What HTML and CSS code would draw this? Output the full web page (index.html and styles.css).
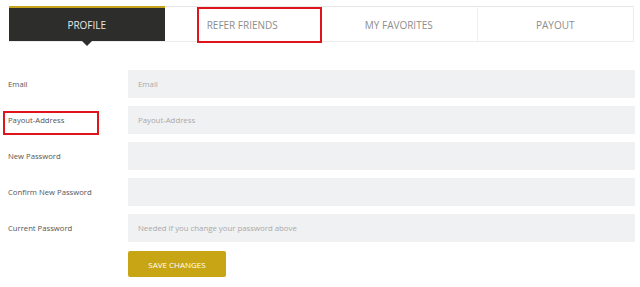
FILE: index.html
```html
<!DOCTYPE html>
<html lang="en">

<head>
    <meta charset="UTF-8">
    <meta name="viewport" content="width=device-width, initial-scale=1.0">
    <title>Profile</title>
    <link rel="stylesheet" href="styles.css">
</head>

<body>
    <div id="all">
        <div class="tabs">
            <div class="tab active">Profile</div>
            <div class="tab">Refer Friends<span class="mark markTab"></span></div>
            <div class="tab">My Favorites</div>
            <div class="tab">Payout</div>
        </div>
        <div class="form">
            <div class="row">
                <label class="label">Email</label>
                <input class="field" type="text" placeholder="Email">
            </div>
            <div class="row">
                <label class="label">Payout-Address<span class="mark markLabel"></span></label>
                <input class="field" type="text" placeholder="Payout-Address">
            </div>
            <div class="row">
                <label class="label">New Password</label>
                <input class="field" type="password">
            </div>
            <div class="row">
                <label class="label">Confirm New Password</label>
                <input class="field" type="password">
            </div>
            <div class="row">
                <label class="label">Current Password</label>
                <input class="field" type="password" placeholder="Needed if you change your password above">
            </div>
            <div class="row">
                <span></span>
                <div><button class="saveButton">Save Changes</button></div>
            </div>
        </div>
    </div>
</body>

</html>
```

FILE: styles.css
```css
html,
body {
    margin: 0;
    padding: 0;
    background: #fff;
}

body {
    font-family: "Open Sans", "Liberation Sans", sans-serif;
}

#all {
    padding: 6px 5px 0 8px;
}

.tabs {
    display: flex;
    margin-left: 1px;
    margin-right: 1px;
    border-top: 1px solid #e6e6e6;
    border-bottom: 1px solid #ececec;
    height: 34px;
}

.tab {
    position: relative;
    flex: 1;
    display: flex;
    align-items: center;
    justify-content: center;
    padding-top: 1px;
    font-size: 10px;
    text-transform: uppercase;
    color: #8d8d8d;
    border-right: 1px solid #eeeeee;
    border-top: 1px solid transparent;
}

.tab:last-child {
    border-right: 1px solid #ececec;
}

.tab.active {
    background: #2d2d2b;
    color: #e8e8e8;
    border-top: 2px solid #c6a31a;
    margin-top: -1px;
    border-right: none;
}

.tab.active::after {
    content: "";
    position: absolute;
    left: 50%;
    bottom: -5px;
    margin-left: -5px;
    border-left: 5px solid transparent;
    border-right: 5px solid transparent;
    border-top: 5px solid #2d2d2b;
}

.mark {
    position: absolute;
    border: 2px solid #e0141b;
    box-sizing: border-box;
}

.markTab {
    left: 32px;
    right: -2px;
    top: -1px;
    bottom: -2px;
}

.markLabel {
    left: -5px;
    top: -4px;
    width: 96px;
    height: 24px;
}

.form {
    margin-top: 28px;
    display: flex;
    flex-direction: column;
    gap: 8px;
}

.row {
    display: grid;
    grid-template-columns: 120px 1fr;
    align-items: center;
}

.label {
    position: relative;
    font-size: 7.7px;
    color: #555;
}

.field {
    height: 28px;
    margin: 0;
    border: none;
    background: #f0f1f3;
    padding: 0 10px;
    font-family: inherit;
    font-size: 7.8px;
    color: #555;
    box-sizing: border-box;
    width: 100%;
}

.field::placeholder {
    color: #a9a9a9;
}

.saveButton {
    margin-top: 1px;
    width: 98px;
    height: 26px;
    border: none;
    border-radius: 2px;
    background: #c8a515;
    color: #fff;
    font-family: inherit;
    font-size: 8px;
    text-transform: uppercase;
}
```
